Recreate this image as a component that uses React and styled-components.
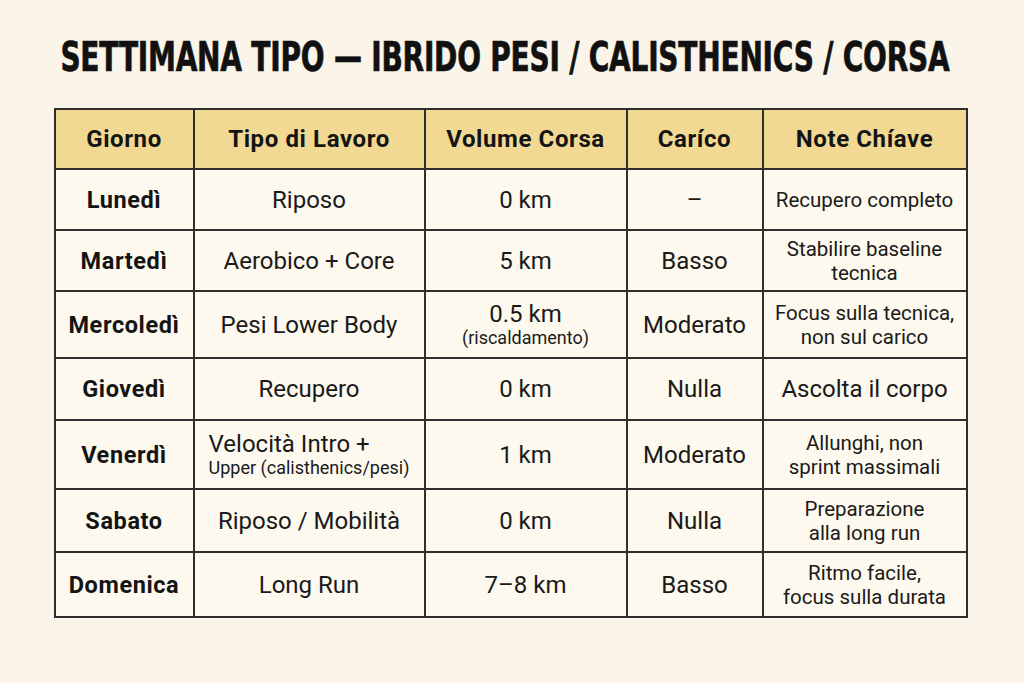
import React from "react";
import styled, { createGlobalStyle } from "styled-components";

const Global = createGlobalStyle`
  html, body { margin: 0; padding: 0; background: #fbf5e9; }
  body { font-family: Roboto, "Liberation Sans", sans-serif; color: #161616; }
`;

const Page = styled.div`
  width: 1024px;
  height: 683px;
  box-sizing: border-box;
  padding-top: 34px;
  display: flex;
  flex-direction: column;
  align-items: center;
`;

const Title = styled.h1`
  margin: 0 0 0 -14px;
  font-family: "DejaVu Sans", sans-serif;
  font-stretch: condensed;
  font-weight: 700;
  font-size: 41px;
  line-height: 46px;
  color: #111;
  -webkit-text-stroke: 0.7px #111;
  white-space: nowrap;
  transform: scaleX(0.76);
  letter-spacing: -0.3px;
`;

const Table = styled.table`
  margin-top: 28px;
  margin-left: -3px;
  border-collapse: collapse;
  table-layout: fixed;
  width: 912px;
  background: #fdf9ee;
  border: 2px solid #2e2e2e;
`;

const HeadCell = styled.th`
  background: #f1d993;
  border: 2px solid #2e2e2e;
  height: 58px;
  padding: 0;
  font-size: 24px;
  font-weight: 700;
  letter-spacing: 0.6px;
  text-align: center;
  vertical-align: middle;
  color: #141414;
`;

const Row = styled.tr`
  height: ${(p) => p.$h}px;
`;

const DayCell = styled.td`
  border: 2px solid #2e2e2e;
  padding: 0;
  text-align: center;
  vertical-align: middle;
  font-size: 23.5px;
  letter-spacing: 0.6px;
  font-weight: 700;
  color: #141414;
`;

const Cell = styled.td`
  border: 2px solid #2e2e2e;
  padding: 0;
  text-align: center;
  vertical-align: middle;
  font-size: ${(p) => (p.$small ? 20.5 : 24)}px;
  line-height: ${(p) => (p.$small ? 24 : 26)}px;
  color: #1a1a1a;
`;

const Stack = styled.div`
  display: inline-block;
  text-align: ${(p) => (p.$left ? "left" : "center")};
`;

const Sub = styled.div`
  font-size: 18px;
  line-height: 22px;
`;

const cols = [139, 231, 202, 136, 204];
const heads = ["Giorno", "Tipo di Lavoro", "Volume Corsa", "Caríco", "Note Chíave"];

const rows = [
  { h: 61, day: "Lunedì", tipo: "Riposo", vol: "0 km", car: "–", note: ["Recupero completo"] },
  { h: 61, day: "Martedì", tipo: "Aerobico + Core", vol: "5 km", car: "Basso", note: ["Stabilire baseline", "tecnica"] },
  { h: 67, day: "Mercoledì", tipo: "Pesi Lower Body", vol: "0.5 km", volSub: "(riscaldamento)", car: "Moderato", note: ["Focus sulla tecnica,", "non sul carico"] },
  { h: 62, day: "Giovedì", tipo: "Recupero", vol: "0 km", car: "Nulla", note: ["Ascolta il corpo"], noteBig: true },
  { h: 69, day: "Venerdì", tipo: "Velocità Intro +", tipoSub: "Upper (calisthenics/pesi)", vol: "1 km", car: "Moderato", note: ["Allunghi, non", "sprint massimali"] },
  { h: 63, day: "Sabato", tipo: "Riposo / Mobilità", vol: "0 km", car: "Nulla", note: ["Preparazione", "alla long run"] },
  { h: 65, day: "Domenica", tipo: "Long Run", vol: "7–8 km", car: "Basso", note: ["Ritmo facile,", "focus sulla durata"] },
];

export default function App() {
  return (
    <Page>
      <Global />
      <Title>SETTIMANA TIPO — IBRIDO PESI / CALISTHENICS / CORSA</Title>
      <Table>
        <colgroup>
          {cols.map((w, i) => (
            <col key={i} style={{ width: w }} />
          ))}
        </colgroup>
        <thead>
          <tr>
            {heads.map((h) => (
              <HeadCell key={h}>{h}</HeadCell>
            ))}
          </tr>
        </thead>
        <tbody>
          {rows.map((r) => (
            <Row key={r.day} $h={r.h}>
              <DayCell>{r.day}</DayCell>
              <Cell>
                <Stack $left={!!r.tipoSub}>
                  {r.tipo}
                  {r.tipoSub && <Sub>{r.tipoSub}</Sub>}
                </Stack>
              </Cell>
              <Cell>
                {r.vol}
                {r.volSub && <Sub>{r.volSub}</Sub>}
              </Cell>
              <Cell>{r.car}</Cell>
              <Cell $small={!r.noteBig}>
                {r.note.map((n) => (
                  <div key={n}>{n}</div>
                ))}
              </Cell>
            </Row>
          ))}
        </tbody>
      </Table>
    </Page>
  );
}
